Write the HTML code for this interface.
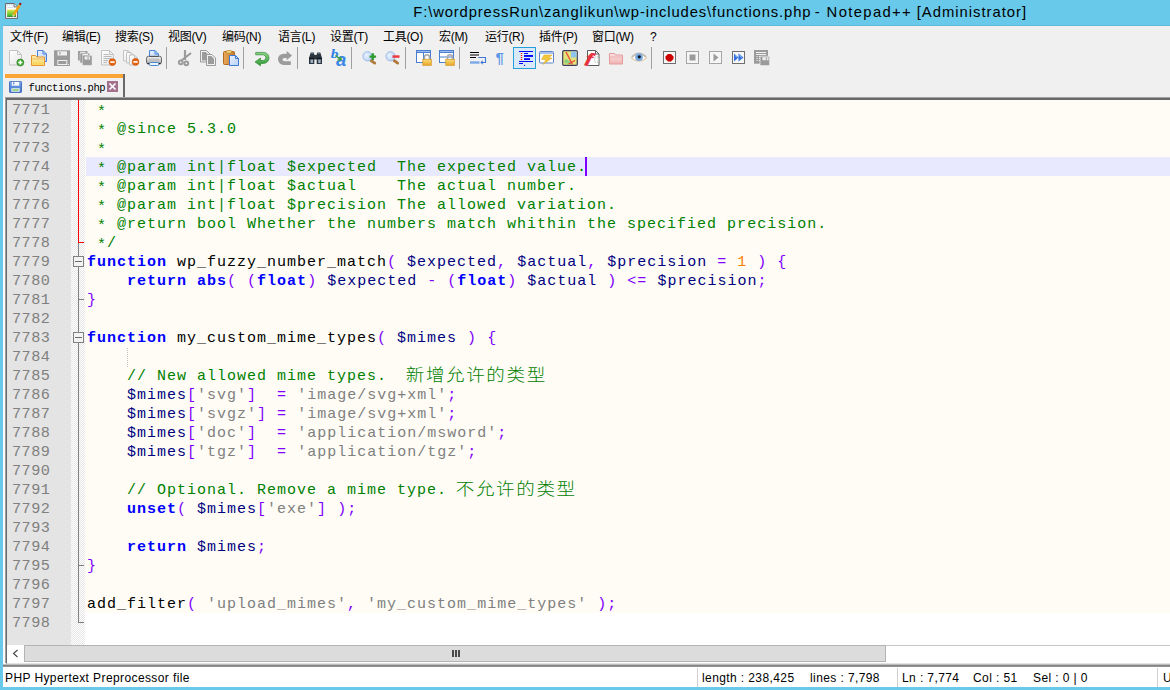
<!DOCTYPE html>
<html lang="zh-CN"><head><meta charset="utf-8"><title>functions.php - Notepad++</title>
<style>
*{box-sizing:border-box;margin:0;padding:0}
html,body{width:1170px;height:690px;overflow:hidden;background:#68c9ea}
body{font-family:"Liberation Sans","Noto Sans CJK SC",sans-serif;position:relative}
#win{position:absolute;left:0;top:0;width:1170px;height:690px;overflow:hidden;background:#68c9ea}
#base{position:absolute;left:3px;top:26px;width:1170px;height:661px;background:#f0f0f0}
#title{position:absolute;left:0;top:0;width:1170px;height:26px}
#appicon{position:absolute;left:4px;top:2px}
#tt{position:absolute;left:0;top:2px;font-size:14.8px;line-height:20px;color:#000;white-space:pre}
#tt span{position:absolute;top:0}
#menu{position:absolute;left:3px;top:26px;width:1170px;height:21px;background:#f0f0f0;box-shadow:0 -1px 0 #63b6d6}
.mi{position:absolute;top:1px;letter-spacing:-0.3px;margin-left:-3px;font-size:12px;line-height:21px;color:#000;white-space:pre}
#tbar{position:absolute;left:3px;top:47px;width:1170px;height:26px;background:#f0f0f0}
#tbar .ic{position:absolute;top:3px;margin-left:-3px}
#tbar .sep{position:absolute;top:0px;width:1px;height:22px;margin-left:-3px;background:#a0a0a0}
#act{position:absolute;left:510px;top:0;width:23px;height:22px;border:1px solid #26a0da;background:#d8eaf9}
#tabs{position:absolute;left:3px;top:73px;width:1170px;height:26px;background:#f0f0f0}
#tab{position:absolute;left:2px;top:1px;width:120px;height:24px;background:#f0f0f0;border-right:2px solid #696969}
#tabtop{position:absolute;left:0;top:0;width:118px;height:4px;background:#faa637}
#tabic{position:absolute;left:4px;top:6.5px}
#tabtx{position:absolute;left:23.5px;top:7px;font-family:"Liberation Mono","Noto Sans CJK SC",monospace;font-size:10.5px;letter-spacing:-0.4px;line-height:14px;color:#000;white-space:pre}
#tabx{position:absolute;left:102px;top:7px}
#edwrap{position:absolute;left:6px;top:98px;width:1170px;height:566px;background:#fff;border-left:1px solid #696969;border-top:2px solid #696969;border-bottom:1px solid #e3e3e3;box-shadow:-1px -1px 0 #a0a0a0,-3px 0 0 #fafafa}

#ed{position:absolute;left:0;top:0;width:1170px;height:545px;background:#fff;overflow:hidden}
#ed > *{position:absolute}
#nummargin{left:0;top:0;width:64px;height:545px;background:#e4e4e4}
#foldmargin{left:64px;top:0;width:14px;height:545px;background:#f2f2f2;background-image:conic-gradient(#fff 25%,#e6e6e6 0 50%,#fff 0 75%,#e6e6e6 0);background-size:2px 2px}
#phpbg{left:78px;top:0;width:1100px;height:513px;background:#fefcf5}
#curline{left:79px;top:57px;width:1100px;height:19px;background:#e8e8ff}
#caret{left:578px;top:57px;width:2px;height:19px;background:#8000ff}
#iguide{left:120px;top:248px;width:1px;height:19px;background-image:linear-gradient(#c0c0c0 50%,transparent 0);background-size:1px 2px}
.ln{left:0;margin-top:-99.5px;width:52px;padding-left:5px;height:19px;font-family:"Liberation Mono",monospace;font-size:15.2px;letter-spacing:0.48px;line-height:19px;color:#808080;white-space:pre}
.cl{left:80px;margin-top:-99.2px;height:19px;font-family:"Liberation Mono","Noto Sans CJK SC",monospace;font-size:15px;letter-spacing:1px;line-height:19px;color:#000;white-space:pre}
.cl .c{color:#008000}
.cl .as{position:relative;top:2.5px}
.cl .k{color:#0000ff;font-weight:bold}
.cl .v{color:#000080}
.cl .s{color:#808080}
.cl .n{color:#ff8000}
.cl .o{color:#8000ff}
.cl .d{color:#000}
.cl .cj{display:inline-block;vertical-align:top;height:19px;line-height:19px;font-family:"Noto Sans CJK SC",sans-serif;font-weight:300;font-size:18.5px;letter-spacing:1.65px;margin-left:-1.3px;transform:scaleY(.9);transform-origin:50% 50%;position:relative;top:-1.8px}
.fv{left:71px;width:1px;background:#808080;margin-top:-100px}
.fh{left:71px;width:6px;height:1px;background:#808080;margin-top:-100px}
.fb{left:66px;width:11px;height:11px;border:1px solid #808080;background:#f3f3f3;margin-top:-100px}
.fb i{position:absolute;left:1px;top:4px;width:7px;height:1px;background:#6a6a6a}
#hs{position:absolute;left:0;top:545px;width:1170px;height:17px;background:#fff}
#hsl{position:absolute;left:0;top:0;width:17px;height:17px;background:#fff}
#hsl svg{position:absolute;left:4px;top:3px}
#hsthumb{position:absolute;left:17px;top:0;width:862px;height:17px;background:#dcdcdc;border:1px solid #b4b4b4}
#hsthumb i{position:absolute;top:4px;width:2px;height:7px;background:#4a4a4a}
#hsthumb i:nth-child(1){left:427px}#hsthumb i:nth-child(2){left:430px}#hsthumb i:nth-child(3){left:433px}
#hsrest{position:absolute;left:879px;top:0;width:300px;height:17px;background:#fff;border-top:1px solid #c8c8c8}
#status{position:absolute;left:3px;top:664px;width:1170px;height:23px;background:#fff;border-top:1px solid #bdbdbd}
#status:before{content:"";position:absolute;left:0;top:0;width:1170px;height:2px;background:linear-gradient(#7a7a7a,#9c9c9c)}
.st{position:absolute;top:4px;margin-left:-3px;font-size:12px;letter-spacing:0.4px;line-height:18px;color:#000;white-space:pre}
.ss{position:absolute;top:3px;width:1px;height:19px;margin-left:-3px;background:#d0d0d0}

</style></head><body>
<div id="win">
<div id="base"></div>
<div id="title"><svg id="appicon" width="22" height="20" viewBox="0 0 22 20"><defs><linearGradient id="gapp" x1="0" y1="0" x2="0" y2="1"><stop offset="0" stop-color="#dfe84a"/><stop offset=".8" stop-color="#4fc032"/><stop offset="1" stop-color="#0a5a0a"/></linearGradient></defs><path d="M1.600 1.500 h8.500 l3.300 3.300 v11.600 h-11.800z" fill="#fff" stroke="#6b6262" stroke-width="1"/><path d="M10 1.500 v3.400 h3.400" fill="#e8e8ee" stroke="#6b6262" stroke-width=".9"/><circle cx="3.600" cy="3" r=".8" fill="#a9d3ee"/><circle cx="5.800" cy="3" r=".8" fill="#a9d3ee"/><circle cx="8" cy="3" r=".8" fill="#a9d3ee"/><path d="M3.500 5.500 h6" stroke="#d5dcea" stroke-width="1"/><rect x="3.100" y="7.700" width="8.900" height="7.100" fill="url(#gapp)"/><path d="M15.800 3 L9.800 12.800" stroke="#f5a40c" stroke-width="2.500"/><path d="M9.800 12.800 l-.9 1.700" stroke="#f3d9a0" stroke-width="1.800"/><path d="M16.300 2.200 l-.7 1.100" stroke="#8a9aa8" stroke-width="2"/><rect x="15.300" y=".9" width="2" height="1.900" fill="#a00008" transform="rotate(12 16.300 1.800)"/></svg><span id="tt"><span style="left:413.3px;letter-spacing:.87px">F:\wordpressRun\zanglikun\wp-includes\functions.php </span><span style="left:814.8px;letter-spacing:1.37px">- Notepad++ </span><span style="left:916.7px;letter-spacing:1px">[Administrator]</span></span></div>
<div id="menu"><span class="mi" style="left:10px">文件(F)</span><span class="mi" style="left:62px">编辑(E)</span><span class="mi" style="left:115px">搜索(S)</span><span class="mi" style="left:168px">视图(V)</span><span class="mi" style="left:222px">编码(N)</span><span class="mi" style="left:278px">语言(L)</span><span class="mi" style="left:330px">设置(T)</span><span class="mi" style="left:383px">工具(O)</span><span class="mi" style="left:439px">宏(M)</span><span class="mi" style="left:485px">运行(R)</span><span class="mi" style="left:539px">插件(P)</span><span class="mi" style="left:592px">窗口(W)</span><span class="mi" style="left:650px">?</span></div>
<div id="tbar"><div id="act"></div><svg class="ic" style="left:8px;overflow:visible" width="16" height="16" viewBox="0 0 16 16"><defs>
<linearGradient id="gpage" x1="0" y1="0" x2="1" y2="1"><stop offset="0" stop-color="#ffffff"/><stop offset="1" stop-color="#e6e6e6"/></linearGradient>
<linearGradient id="gbpage" x1="0" y1="0" x2="1" y2="1"><stop offset="0" stop-color="#e8f1ff"/><stop offset="1" stop-color="#b9d2fb"/></linearGradient>
<linearGradient id="gfold" x1="0" y1="0" x2="0" y2="1"><stop offset="0" stop-color="#fbe9a0"/><stop offset="1" stop-color="#f7cf4a"/></linearGradient>
<linearGradient id="gclip" x1="0" y1="0" x2="1" y2="0"><stop offset="0" stop-color="#e9a75a"/><stop offset="1" stop-color="#c47c2c"/></linearGradient>
<linearGradient id="gundo" x1="0" y1="0" x2="0" y2="1"><stop offset="0" stop-color="#8fd48a"/><stop offset="1" stop-color="#2f9a36"/></linearGradient>
<linearGradient id="glock" x1="0" y1="0" x2="0" y2="1"><stop offset="0" stop-color="#f9dc7a"/><stop offset="1" stop-color="#e9a92a"/></linearGradient>
<linearGradient id="gprn" x1="0" y1="0" x2="0" y2="1"><stop offset="0" stop-color="#f4f4f4"/><stop offset="1" stop-color="#a8a8a8"/></linearGradient>
<radialGradient id="glens" cx="0.4" cy="0.4" r="0.7"><stop offset="0" stop-color="#eaf3ff"/><stop offset="1" stop-color="#b5cff5"/></radialGradient>
<linearGradient id="gpf" x1="0" y1="0" x2="0" y2="1"><stop offset="0" stop-color="#fbe3e3"/><stop offset="1" stop-color="#f0b4b4"/></linearGradient>
</defs><path d="M1.5 0.5 h8 l4 4 v10.5 h-12 z" fill="url(#gpage)" stroke="#c3c3c3" stroke-width="1"/><path d="M9.5 0.5 v4 h4" fill="none" stroke="#c3c3c3" stroke-width="1"/><circle cx="12.3" cy="12.5" r="3.5" fill="#4aa83a" stroke="#2f8524" stroke-width=".7"/><path d="M12.3 10.400v4.200M10.200 12.500h4.200" stroke="#fff" stroke-width="1.500"/></svg><svg class="ic" style="left:31px;overflow:visible" width="16" height="16" viewBox="0 0 16 16"><path d="M6.5 0.5 h5.5 l3.5 3.5 v7.5 h-9 z" fill="url(#gbpage)" stroke="#4a7fd6" stroke-width="1"/><path d="M12 0.5 v3.5 h3.5" fill="none" stroke="#4a7fd6" stroke-width="1"/><path d="M.5 5.500 h4 l1.500 1.500 h7.500 v8.500 h-13z" fill="#fbe7a2" stroke="#e8952c" stroke-width="1"/><path d="M1.300 9.500 h11.400 v5.200 h-11.400z" fill="url(#gfold)"/><path d="M1 9 h12" stroke="#f0b04a" stroke-width=".8"/></svg><svg class="ic" style="left:54px;overflow:visible" width="16" height="16" viewBox="0 0 16 16"><rect x="0" y=".3" width="16" height="15.700" fill="#9b9b9b"/><rect x="3.500" y="1.300" width="9.500" height="4.200" fill="#f0f0f0"/><rect x="5.300" y="2" width="1.200" height="2.500" fill="#9b9b9b"/><rect x="3.300" y="10" width="10" height="5" fill="#f0f0f0"/><rect x="4.300" y="11" width="8" height="3" fill="#9b9b9b"/><rect x="14" y="14" width="1" height="1" fill="#f0f0f0"/></svg><svg class="ic" style="left:77px;overflow:visible" width="16" height="16" viewBox="0 0 16 16"><rect x="1" y="1" width="9.500" height="9.500" fill="#9b9b9b"/><rect x="3" y="3.200" width="9.700" height="9.700" fill="#9b9b9b" stroke="#e4e4e4" stroke-width=".5"/><rect x="5.300" y="5.500" width="9.700" height="9.700" fill="#9b9b9b" stroke="#e4e4e4" stroke-width=".5"/><rect x="3" y="1.800" width="5.500" height="1" fill="#f0f0f0"/><rect x="5.500" y="4" width="5.500" height="1" fill="#f0f0f0"/><rect x="7.500" y="6.500" width="5.500" height="3" fill="#f0f0f0"/><rect x="10.500" y="7.100" width="1.200" height="1.800" fill="#9b9b9b"/></svg><svg class="ic" style="left:100px;overflow:visible" width="16" height="16" viewBox="0 0 16 16"><path d="M1.5 0.5 h8 l4 4 v10.5 h-12 z" fill="url(#gpage)" stroke="#c3c3c3" stroke-width="1"/><path d="M9.5 0.5 v4 h4" fill="none" stroke="#c3c3c3" stroke-width="1"/><path d="M3.500 4.500h5M3.500 6.500h8M3.500 8.500h8M3.500 10.500h4.500M3.500 12.500h3.500" stroke="#b9b9b9" stroke-width="1"/><circle cx="12.4" cy="12.1" r="3.4" fill="#e8640c" stroke="#c94e06" stroke-width=".6"/><rect x="10.2" y="11.3" width="4.4" height="1.6" fill="#fff"/></svg><svg class="ic" style="left:123px;overflow:visible" width="16" height="16" viewBox="0 0 16 16"><path d="M0.5 0.5 h4.5 l2.5 2.5 v8 h-7 z" fill="url(#gpage)" stroke="#c3c3c3" stroke-width="1"/><path d="M5 0.5 v2.5 h2.5" fill="none" stroke="#c3c3c3" stroke-width="1"/><path d="M3.5 2.5 h4.5 l2.5 2.5 v8 h-7 z" fill="url(#gpage)" stroke="#c3c3c3" stroke-width="1"/><path d="M8 2.5 v2.5 h2.5" fill="none" stroke="#c3c3c3" stroke-width="1"/><path d="M6.5 5 h5 l3 3 v7 h-8 z" fill="url(#gpage)" stroke="#c3c3c3" stroke-width="1"/><path d="M11.5 5 v3 h3" fill="none" stroke="#c3c3c3" stroke-width="1"/><circle cx="12.5" cy="11.9" r="3.4" fill="#e8640c" stroke="#c94e06" stroke-width=".6"/><rect x="10.3" y="11.1" width="4.4" height="1.6" fill="#fff"/></svg><svg class="ic" style="left:146px;overflow:visible" width="16" height="16" viewBox="0 0 16 16"><path d="M3.5 0.5 h5.5 l3.5 3.5 v3.5 h-9 z" fill="url(#gbpage)" stroke="#4a86d8" stroke-width="1"/><path d="M9 0.5 v3.5 h3.5" fill="none" stroke="#4a86d8" stroke-width="1"/><rect x=".5" y="6.300" width="15" height="7.700" rx="2" fill="url(#gprn)" stroke="#6a6a6a" stroke-width="1"/><path d="M1.500 13.500 h13" stroke="#222" stroke-width="1.200"/><rect x="3.500" y="12.500" width="9" height="3" rx=".8" fill="#eef7f7" stroke="#4a86d8" stroke-width="1"/><rect x="3" y="8.500" width="10" height="2.500" fill="#bcbcbc" opacity=".7"/><rect x="3.300" y="6" width="9.400" height="1" fill="#555"/></svg><svg class="ic" style="left:177px;overflow:visible" width="16" height="16" viewBox="0 0 16 16"><path d="M8 0 V10 M14 3 L4.500 10.500" stroke="#9b9b9b" stroke-width="2.200" fill="none"/><circle cx="3.800" cy="12.300" r="1.900" fill="none" stroke="#9b9b9b" stroke-width="2"/><circle cx="9.300" cy="13.300" r="1.900" fill="none" stroke="#9b9b9b" stroke-width="2"/></svg><svg class="ic" style="left:200px;overflow:visible" width="16" height="16" viewBox="0 0 16 16"><path d="M.5 .5 h6 l3.500 3.500 v8 h-9.500z" fill="#f0f0f0" stroke="#9b9b9b" stroke-width="1"/><path d="M2 2 h3.700 l2.800 2.800 v5.700 h-6.500z" fill="#9b9b9b"/><path d="M6.500 4.500 h5.500 l3.500 3.500 v7.500 h-9z" fill="#f0f0f0" stroke="#9b9b9b" stroke-width="1"/><path d="M8 6 h3.300 l2.700 2.700 v5.300 h-6z" fill="#9b9b9b"/></svg><svg class="ic" style="left:223px;overflow:visible" width="16" height="16" viewBox="0 0 16 16"><rect x=".5" y="1.5" width="11" height="13" rx="1" fill="url(#gclip)" stroke="#b26a1e"/><rect x="3.5" y=".5" width="5" height="2.6" rx=".8" fill="#f6d982" stroke="#b98a2e" stroke-width=".8"/><path d="M6.5 5.5 h6 l3 3 v7 h-9 z" fill="url(#gbpage)" stroke="#3f78d2" stroke-width="1"/><path d="M12.5 5.5 v3 h3" fill="none" stroke="#3f78d2" stroke-width="1"/></svg><svg class="ic" style="left:254px;overflow:visible" width="16" height="16" viewBox="0 0 16 16"><path d="M1.700 2.400 H9.500 A5.500 5.500 0 0 1 9.500 13.400 H6.500 V15.800 L1 11.900 L6.500 8 V10.500 H9.500 A2.900 2.900 0 0 0 9.500 4.800 H1.700 Z" fill="url(#gundo)" stroke="#2c8a32" stroke-width=".7" stroke-linejoin="round"/></svg><svg class="ic" style="left:277px;overflow:visible" width="16" height="16" viewBox="0 0 16 16"><path d="M9.700 1 L15 5.600 L9.700 10.200 V7.900 H7.200 A1.700 1.700 0 0 0 7.200 11.300 H13.800 V15 H6.600 A5.650 5.650 0 0 1 6.600 3.700 H9.700 Z" fill="#9b9b9b"/></svg><svg class="ic" style="left:308px;overflow:visible" width="16" height="16" viewBox="0 0 16 16"><path d="M1 8 l1.700 -5.500 h3 l.8 2.500 h2 l.8 -2.500 h3 l1.700 5.500 v6 h-5.300 v-4.500 h-2.400 v4.500 h-5.300z" fill="#2c3640"/><path d="M3.200 3 h2.300 M9.500 3 h2.300" stroke="#8fa0b2" stroke-width="1"/><rect x="2.500" y="9.500" width="2.500" height="3.500" fill="#9fb0c3"/><rect x="10.200" y="9.500" width="2.500" height="3.500" fill="#9fb0c3"/><path d="M1 8.300 h5.300 M8.700 8.300 h5.300" stroke="#10161c" stroke-width="1.300"/></svg><svg class="ic" style="left:331px;overflow:visible" width="16" height="16" viewBox="0 0 16 16"><text transform="translate(-.3 7.700) scale(1.350 1)" font-family="Liberation Serif,serif" font-style="italic" font-weight="bold" font-size="11.500" fill="#2f80e6">b</text><text x="5" y="15.700" font-family="Liberation Sans,sans-serif" font-style="italic" font-weight="bold" font-size="18.500" fill="#3b87e8">a</text><path d="M4.500 5.500 l5 3.800 M6.500 10 l3.700 -.3 l-.9 -3" stroke="#3da03a" stroke-width="1.400" fill="none"/></svg><svg class="ic" style="left:362px;overflow:visible" width="16" height="16" viewBox="0 0 16 16"><path d="M9 10.500 l3.700 2.600" stroke="#b07a3c" stroke-width="2.800" stroke-linecap="round"/><circle cx="5.500" cy="6.300" r="4.600" fill="url(#glens)" stroke="#9dbbe6" stroke-width="1"/><path d="M10.800 3.200 v6.800 M7.500 6.600 h6.600" stroke="#2f9a2e" stroke-width="2.300"/></svg><svg class="ic" style="left:385px;overflow:visible" width="16" height="16" viewBox="0 0 16 16"><path d="M9 10.500 l3.700 2.600" stroke="#b07a3c" stroke-width="2.800" stroke-linecap="round"/><circle cx="5.500" cy="6.300" r="4.600" fill="url(#glens)" stroke="#9dbbe6" stroke-width="1"/><rect x="7.500" y="5.300" width="7" height="2.500" fill="#ee3a43"/></svg><svg class="ic" style="left:416px;overflow:visible" width="16" height="16" viewBox="0 0 16 16"><rect x=".5" y=".5" width="14" height="12" fill="#fff" stroke="#4a7fd0"/><rect x=".5" y=".5" width="14" height="2" fill="#9dbdf0" stroke="#4a7fd0"/><path d="M7.500 2.500 v10" stroke="#4a7fd0"/><path d="M8.5 9.3 v-2 a2.500 2.500 0 0 1 5 0 v2" fill="none" stroke="#a9a9a9" stroke-width="1.600"/><rect x="6.8" y="9.3" width="8.500" height="6" fill="url(#glock)" stroke="#d89a2a" stroke-width=".8"/></svg><svg class="ic" style="left:439px;overflow:visible" width="16" height="16" viewBox="0 0 16 16"><rect x=".5" y=".5" width="14" height="12" fill="#fff" stroke="#4a7fd0"/><rect x=".5" y=".5" width="14" height="2" fill="#9dbdf0" stroke="#4a7fd0"/><path d="M.5 7 h14" stroke="#4a7fd0"/><path d="M8.5 9.3 v-2 a2.500 2.500 0 0 1 5 0 v2" fill="none" stroke="#a9a9a9" stroke-width="1.600"/><rect x="6.8" y="9.3" width="8.500" height="6" fill="url(#glock)" stroke="#d89a2a" stroke-width=".8"/></svg><svg class="ic" style="left:470px;overflow:visible" width="16" height="16" viewBox="0 0 16 16"><path d="M0 2.500 h9 M0 5 h9 M0 7.500 h6" stroke="#000" stroke-width="1.100"/><rect x="0" y="11.300" width="9.500" height="2.400" fill="#7aa7e8"/><path d="M8.300 7.500 h7.200 v5 h-3.500" fill="none" stroke="#3f78d2" stroke-width="1.100"/><path d="M12.700 10.300 l-2.400 2.200 l2.400 2.200z" fill="#3f78d2"/></svg><svg class="ic" style="left:493px;overflow:visible" width="16" height="16" viewBox="0 0 16 16"><text x="2.500" y="12.800" font-family="Liberation Sans,sans-serif" font-size="15" font-weight="bold" fill="#5f97e8">¶</text></svg><svg class="ic" style="left:516px;overflow:visible" width="16" height="16" viewBox="0 0 16 16"><path d="M3 1.500 h14 M8 3.500 h4 M3 11.500 h14 M3 13.500 h4" stroke="#0000ff" stroke-width="1.100"/><rect x="8" y="5" width="9" height="1.900" fill="#0000ff"/><rect x="8" y="8.200" width="6" height="1.800" fill="#0000ff"/><rect x="8" y="14.800" width="1.100" height="1.100" fill="#0000ff"/><path d="M5.500 3 v8" stroke="#ff0000" stroke-width="1.300" stroke-dasharray="1 1"/></svg><svg class="ic" style="left:539px;overflow:visible" width="16" height="16" viewBox="0 0 16 16"><rect x=".5" y="1.500" width="14" height="11.500" rx="1" fill="#fff" stroke="#5b83c8"/><rect x="1" y="2" width="13" height="2" fill="#a9c3ee"/><path d="M5 5 h8 l-3.500 3 h3.500 l-9 6.500 l3 -5 h-4.500z" fill="#f3c63a" stroke="#d9a522" stroke-width=".5"/></svg><svg class="ic" style="left:562px;overflow:visible" width="16" height="16" viewBox="0 0 16 16"><rect x=".7" y=".6" width="14.600" height="14.800" rx="1.200" fill="#e6e27a" stroke="#3c3c5c" stroke-width="1.200"/><rect x="9" y="1.500" width="5.600" height="6" fill="#8fc4ee"/><circle cx="4.500" cy="11.500" r="2.300" fill="#8fd07a"/><circle cx="8" cy="12.500" r="2" fill="#8fd07a"/><path d="M4 2 L10.500 14.500 M13 10.500 L6.500 14" stroke="#f0483a" stroke-width="1.300"/></svg><svg class="ic" style="left:585px;overflow:visible" width="16" height="16" viewBox="0 0 16 16"><path d="M2.500 .5 h8 l3.500 3.500 v11.500 h-11.500z" fill="#fff" stroke="#5a5a5a"/><path d="M10.500 .5 v3.500 h3.500" fill="none" stroke="#5a5a5a"/><text transform="translate(.5 12) rotate(14) scale(1.150 .9)" font-family="Liberation Serif,serif" font-style="italic" font-weight="bold" font-size="16" fill="#e8323c" stroke="#e8323c" stroke-width=".9">f</text><path d="M10.300 6 q-1.500 3.500 0 7 M12.500 6 q1.500 3.500 0 7" stroke="#c9d6c9" stroke-width="1" fill="none"/></svg><svg class="ic" style="left:608px;overflow:visible" width="16" height="16" viewBox="0 0 16 16"><path d="M1.500 3.500 h5 l1 1.500 h7 v9 h-13z" fill="url(#gpf)" stroke="#e49a9a" stroke-width="1"/><path d="M2 7 h12" stroke="#eab0b0" stroke-width="1"/></svg><svg class="ic" style="left:631px;overflow:visible" width="16" height="16" viewBox="0 0 16 16"><path d="M.3 8 Q8 .5 15.700 8 Q8 14.500 .3 8z" fill="#fbfbf6" stroke="#dcc49a" stroke-width="1"/><path d="M.8 6.800 Q8 -.5 15.200 6.800" fill="none" stroke="#b9b9b9" stroke-width="1.400"/><circle cx="8" cy="7.300" r="3.800" fill="#7aa6e0"/><circle cx="8.300" cy="6.800" r="1.600" fill="#101820"/></svg><svg class="ic" style="left:662px;overflow:visible" width="16" height="16" viewBox="0 0 16 16"><rect x="1.500" y="1.500" width="12" height="12" fill="#f6f6f6" stroke="#6f6f6f" stroke-width="1"/><path d="M6 4 h3 l2.500 2.500 v2.500 l-2.500 2.500 h-3 l-2.500 -2.500 v-2.500z" fill="#cc0000"/></svg><svg class="ic" style="left:685px;overflow:visible" width="16" height="16" viewBox="0 0 16 16"><rect x="1.500" y="1.500" width="12" height="12" fill="#f6f6f6" stroke="#a5a5a5" stroke-width="1"/><rect x="4.500" y="4.500" width="6" height="6" fill="#9b9b9b"/></svg><svg class="ic" style="left:708px;overflow:visible" width="16" height="16" viewBox="0 0 16 16"><rect x="1.500" y="1.500" width="12" height="12" fill="#f6f6f6" stroke="#a5a5a5" stroke-width="1"/><path d="M5.500 3.500 l5 4 l-5 4z" fill="#9b9b9b"/></svg><svg class="ic" style="left:731px;overflow:visible" width="16" height="16" viewBox="0 0 16 16"><rect x="1.500" y="1.500" width="12" height="12" fill="#f6f6f6" stroke="#6f6f6f" stroke-width="1"/><path d="M3 3.500 l4.500 4 l-4.500 4z M7.500 3.500 l5 4 l-5 4z" fill="#2f6fe0"/><path d="M3.800 5.300 l2.400 2.200 M8.300 5.300 l2.800 2.200" stroke="#9cc0f7" stroke-width="1"/></svg><svg class="ic" style="left:754px;overflow:visible" width="16" height="16" viewBox="0 0 16 16"><rect x="0" y="0" width="14" height="13.700" fill="#9b9b9b"/><path d="M2 2.500 h10 M2 4.500 h10" stroke="#f0f0f0" stroke-width="1"/><path d="M2.500 6.500 h1.200 M5 6.500 h1.200 M2.500 8.500 h1.200 M5 8.500 h1.200 M2.500 10.500 h1.200 M5 10.500 h1.200" stroke="#f0f0f0" stroke-width="1.100"/><rect x="6" y="6.200" width="9.700" height="9.500" fill="#9b9b9b" stroke="#f0f0f0" stroke-width=".7"/><rect x="8.500" y="7.200" width="6" height="3" fill="#f0f0f0"/><rect x="11.800" y="7.700" width="1.300" height="2" fill="#9b9b9b"/>
</svg><div class="sep" style="left:166px"></div><div class="sep" style="left:243px"></div><div class="sep" style="left:297px"></div><div class="sep" style="left:351px"></div><div class="sep" style="left:405px"></div><div class="sep" style="left:459px"></div><div class="sep" style="left:651px"></div></div>
<div id="tabs"><div id="tab"><div id="tabtop"></div><svg id="tabic" width="13" height="12" viewBox="0 0 14 14" preserveAspectRatio="none"><defs><linearGradient id="gtab" x1="0" y1="0" x2="0" y2="1"><stop offset="0" stop-color="#7aa6ea"/><stop offset="1" stop-color="#3f6fc8"/></linearGradient></defs><rect x=".5" y=".5" width="13" height="13" rx="1" fill="url(#gtab)" stroke="#3b66b8"/><rect x="3" y="1" width="8" height="4.500" fill="#f4f8ff"/><rect x="4.500" y="1.500" width="1.200" height="2.500" fill="#4a78d0"/><rect x="2.500" y="8.500" width="9" height="4" fill="#f4f8ff"/><rect x="3.500" y="9.500" width="7" height="2" fill="#8fd07a"/></svg><span id="tabtx">functions.php</span><svg id="tabx" width="11" height="11" viewBox="0 0 11 11"><rect x="0" y="0" width="11" height="11" fill="#a4718f"/><path d="M2.500 2.500 l6 6 M8.500 2.500 l-6 6" stroke="#fff" stroke-width="1.700"/></svg></div></div>
<div id="edwrap">
<div id="ed">
<div id="nummargin"></div><div id="foldmargin"></div><div id="phpbg"></div><div id="curline"></div><div id="caret"></div><div id="iguide"></div>
<div class="ln" style="top:100px">7771</div>
<div class="ln" style="top:119px">7772</div>
<div class="ln" style="top:138px">7773</div>
<div class="ln" style="top:157px">7774</div>
<div class="ln" style="top:176px">7775</div>
<div class="ln" style="top:195px">7776</div>
<div class="ln" style="top:214px">7777</div>
<div class="ln" style="top:233px">7778</div>
<div class="ln" style="top:252px">7779</div>
<div class="ln" style="top:271px">7780</div>
<div class="ln" style="top:290px">7781</div>
<div class="ln" style="top:309px">7782</div>
<div class="ln" style="top:328px">7783</div>
<div class="ln" style="top:347px">7784</div>
<div class="ln" style="top:366px">7785</div>
<div class="ln" style="top:385px">7786</div>
<div class="ln" style="top:404px">7787</div>
<div class="ln" style="top:423px">7788</div>
<div class="ln" style="top:442px">7789</div>
<div class="ln" style="top:461px">7790</div>
<div class="ln" style="top:480px">7791</div>
<div class="ln" style="top:499px">7792</div>
<div class="ln" style="top:518px">7793</div>
<div class="ln" style="top:537px">7794</div>
<div class="ln" style="top:556px">7795</div>
<div class="ln" style="top:575px">7796</div>
<div class="ln" style="top:594px">7797</div>
<div class="ln" style="top:613px">7798</div>
<div class="fv" style="top:99px;height:143px;background:#f00"></div>
<div class="fh" style="top:242px;background:#f00"></div>
<div class="fv" style="top:243px;height:380px"></div>
<div class="fh" style="top:299px"></div>
<div class="fh" style="top:565px"></div>
<div class="fh" style="top:622px"></div>
<div class="fb" style="top:256px"><i></i></div>
<div class="fb" style="top:332px"><i></i></div>
<div class="cl" style="top:100px"><span class="c"> <span class="as">*</span></span></div>
<div class="cl" style="top:119px"><span class="c"> <span class="as">*</span> @since 5.3.0</span></div>
<div class="cl" style="top:138px"><span class="c"> <span class="as">*</span></span></div>
<div class="cl" style="top:157px"><span class="c"> <span class="as">*</span> @param int|float $expected  The expected value.</span></div>
<div class="cl" style="top:176px"><span class="c"> <span class="as">*</span> @param int|float $actual    The actual number.</span></div>
<div class="cl" style="top:195px"><span class="c"> <span class="as">*</span> @param int|float $precision The allowed variation.</span></div>
<div class="cl" style="top:214px"><span class="c"> <span class="as">*</span> @return bool Whether the numbers match whithin the specified precision.</span></div>
<div class="cl" style="top:233px"><span class="c"> <span class="as">*</span>/</span></div>
<div class="cl" style="top:252px"><span class="k">function</span><span class="d"> wp_fuzzy_number_match</span><span class="o">(</span> <span class="v">$expected</span><span class="o">,</span> <span class="v">$actual</span><span class="o">,</span> <span class="v">$precision</span> <span class="o">=</span> <span class="n">1</span> <span class="o">)</span> <span class="o">{</span></div>
<div class="cl" style="top:271px">    <span class="k">return</span> <span class="k">abs</span><span class="o">(</span> <span class="o">(</span><span class="k">float</span><span class="o">)</span> <span class="v">$expected</span> <span class="o">-</span> <span class="o">(</span><span class="k">float</span><span class="o">)</span> <span class="v">$actual</span> <span class="o">)</span> <span class="o">&lt;=</span> <span class="v">$precision</span><span class="o">;</span></div>
<div class="cl" style="top:290px"><span class="o">}</span></div>
<div class="cl" style="top:328px"><span class="k">function</span><span class="d"> my_custom_mime_types</span><span class="o">(</span> <span class="v">$mimes</span> <span class="o">)</span> <span class="o">{</span></div>
<div class="cl" style="top:366px">    <span class="c">// New allowed mime types.  </span><span class="c"><span class="cj">新增允许的类型</span></span></div>
<div class="cl" style="top:385px">    <span class="v">$mimes</span><span class="o">[</span><span class="s">'svg'</span><span class="o">]</span>  <span class="o">=</span> <span class="s">'image/svg+xml'</span><span class="o">;</span></div>
<div class="cl" style="top:404px">    <span class="v">$mimes</span><span class="o">[</span><span class="s">'svgz'</span><span class="o">]</span> <span class="o">=</span> <span class="s">'image/svg+xml'</span><span class="o">;</span></div>
<div class="cl" style="top:423px">    <span class="v">$mimes</span><span class="o">[</span><span class="s">'doc'</span><span class="o">]</span>  <span class="o">=</span> <span class="s">'application/msword'</span><span class="o">;</span></div>
<div class="cl" style="top:442px">    <span class="v">$mimes</span><span class="o">[</span><span class="s">'tgz'</span><span class="o">]</span>  <span class="o">=</span> <span class="s">'application/tgz'</span><span class="o">;</span></div>
<div class="cl" style="top:480px">    <span class="c">// Optional. Remove a mime type. </span><span class="c"><span class="cj">不允许的类型</span></span></div>
<div class="cl" style="top:499px">    <span class="k">unset</span><span class="o">(</span> <span class="v">$mimes</span><span class="o">[</span><span class="s">'exe'</span><span class="o">]</span> <span class="o">)</span><span class="o">;</span></div>
<div class="cl" style="top:537px">    <span class="k">return</span> <span class="v">$mimes</span><span class="o">;</span></div>
<div class="cl" style="top:556px"><span class="o">}</span></div>
<div class="cl" style="top:594px"><span class="d">add_filter</span><span class="o">(</span> <span class="s">'upload_mimes'</span><span class="o">,</span> <span class="s">'my_custom_mime_types'</span> <span class="o">)</span><span class="o">;</span></div>
</div>
<div id="hs"><div id="hsl"><svg width="9" height="11" viewBox="0 0 9 11"><path d="M6.5 2 L2.5 5.5 L6.5 9" fill="none" stroke="#444" stroke-width="1.1"/></svg></div><div id="hsthumb"><i></i><i></i><i></i></div><div id="hsrest"></div></div>
</div>
<div id="status">
<span class="st" style="left:5px">PHP Hypertext Preprocessor file</span>
<div class="ss" style="left:697px"></div>
<span class="st" style="left:702px">length : 238,425</span>
<span class="st" style="left:810px">lines : 7,798</span>
<div class="ss" style="left:897px"></div>
<span class="st" style="left:902px">Ln : 7,774</span>
<span class="st" style="left:973px">Col : 51</span>
<span class="st" style="left:1033px">Sel : 0 | 0</span>
<div class="ss" style="left:1157px"></div>
<span class="st" style="left:1163px">UTF-8</span>
</div>
</div>
</body></html>
